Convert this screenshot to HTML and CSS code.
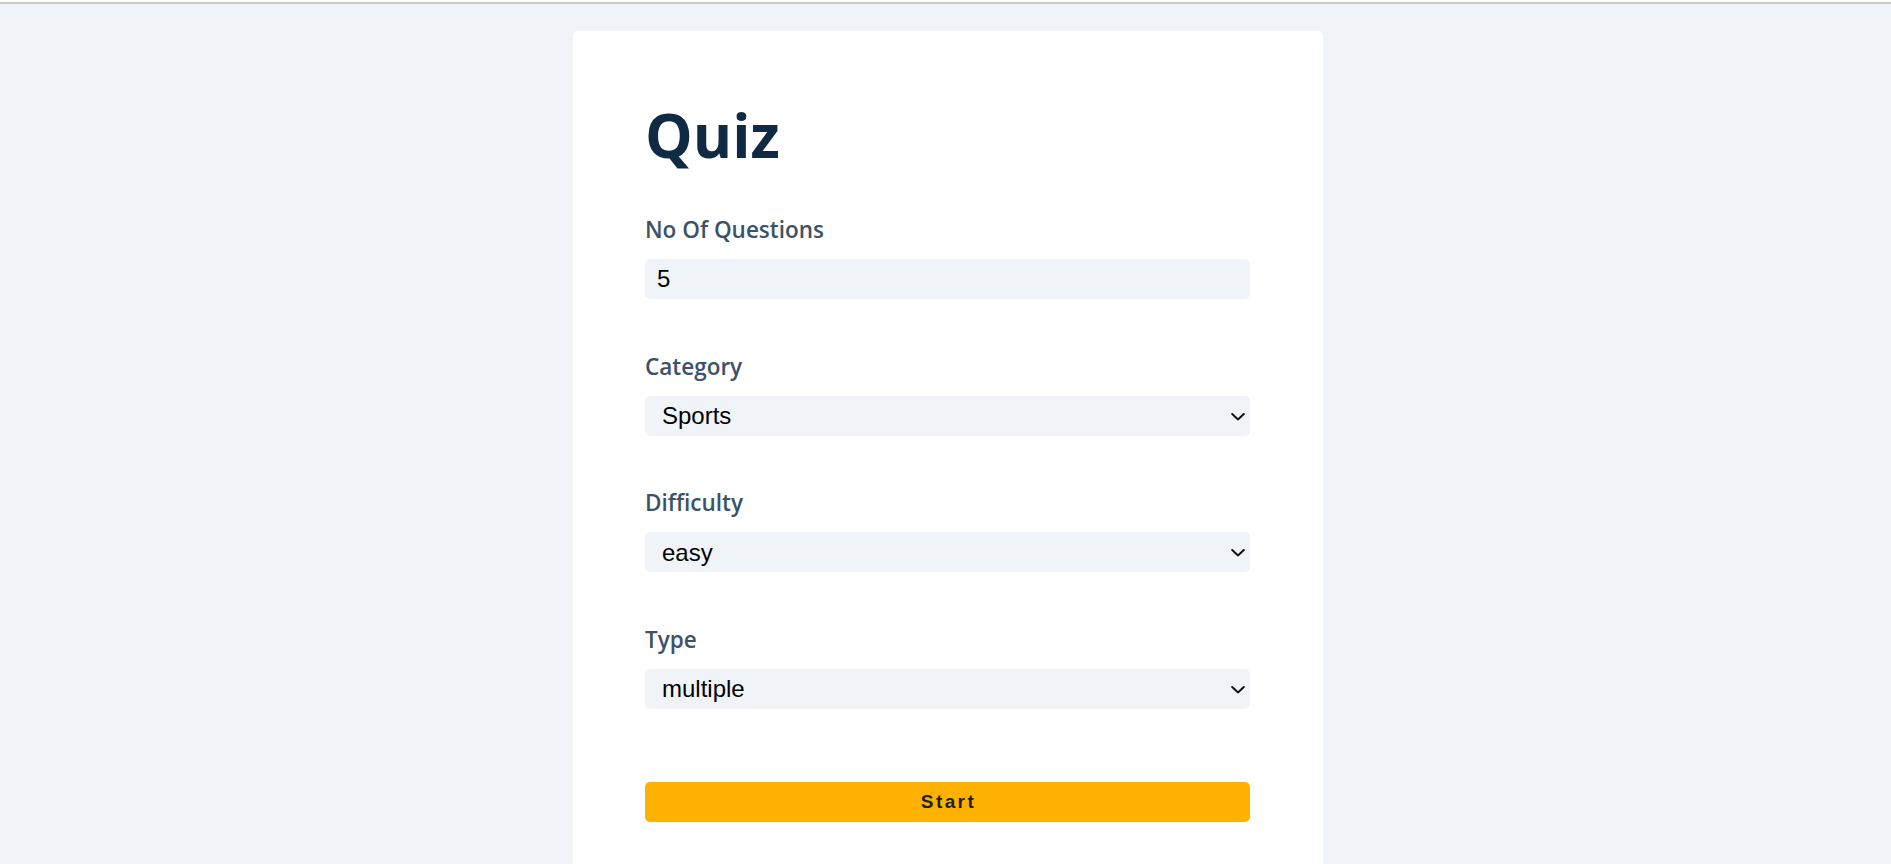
FILE: index.html
```html
<!DOCTYPE html>
<html lang="en">
<head>
<meta charset="utf-8">
<title>Quiz</title>
<link rel="stylesheet" href="styles.css">
</head>
<body>
<div class="edge"></div>
<main class="page">
  <section class="card">
    <h1 class="title">Quiz</h1>
    <form class="form">
      <div class="group">
        <label class="label" for="amount">No Of Questions</label>
        <input class="field" id="amount" type="number" value="5">
      </div>
      <div class="group">
        <label class="label" for="category">Category</label>
        <div class="select-wrap">
          <select class="field select" id="category">
            <option>Sports</option>
            <option>History</option>
            <option>Politics</option>
          </select>
          <svg class="chevron" width="14" height="8" viewBox="0 0 14 8"><path d="M1.2 1.2 L7 6.6 L12.8 1.2" fill="none" stroke="#111" stroke-width="2" stroke-linecap="round" stroke-linejoin="round"/></svg>
        </div>
      </div>
      <div class="group">
        <label class="label" for="difficulty">Difficulty</label>
        <div class="select-wrap">
          <select class="field select" id="difficulty">
            <option>easy</option>
            <option>medium</option>
            <option>hard</option>
          </select>
          <svg class="chevron" width="14" height="8" viewBox="0 0 14 8"><path d="M1.2 1.2 L7 6.6 L12.8 1.2" fill="none" stroke="#111" stroke-width="2" stroke-linecap="round" stroke-linejoin="round"/></svg>
        </div>
      </div>
      <div class="group">
        <label class="label" for="type">Type</label>
        <div class="select-wrap">
          <select class="field select" id="type">
            <option>multiple</option>
            <option>boolean</option>
          </select>
          <svg class="chevron" width="14" height="8" viewBox="0 0 14 8"><path d="M1.2 1.2 L7 6.6 L12.8 1.2" fill="none" stroke="#111" stroke-width="2" stroke-linecap="round" stroke-linejoin="round"/></svg>
        </div>
      </div>
      <button class="start" type="button">Start</button>
    </form>
  </section>
</main>
</body>
</html>
```

FILE: styles.css
```css
* { box-sizing: border-box; }

html, body {
  margin: 0;
  padding: 0;
  height: 100%;
  overflow: hidden;
}

body {
  background: #f0f4f8;
  font-family: "Open Sans", "Noto Sans", sans-serif;
}

.edge {
  height: 4px;
  background: #ffffff;
  border-top: 2px solid #ffffff;
  border-bottom: 2px solid #c8c9cc;
}

.page {
  display: flex;
  justify-content: center;
  padding-left: 5px;
  padding-top: 27px;
}

.card {
  width: 750px;
  min-height: 900px;
  background: #ffffff;
  border-radius: 5px;
  padding: 68px 73px 60px 72px;
}

.title {
  margin: 0 0 44px 0;
  font-size: 60px;
  line-height: 72px;
  font-weight: 700;
  color: #102a43;
  letter-spacing: 0;
}

.form {
  display: flex;
  flex-direction: column;
}

.group {
  display: flex;
  flex-direction: column;
  margin-bottom: 52.5px;
}

.label {
  font-size: 22.5px;
  line-height: 30px;
  font-weight: 600;
  color: #3b5269;
  margin-bottom: 14px;
}

.field {
  width: 100%;
  height: 40px;
  border: none;
  outline: none;
  border-radius: 5px;
  background: #f0f4f8;
  font-family: "Liberation Sans", Arial, sans-serif;
  font-size: 24px;
  color: #000;
  padding: 0 12px;
  margin: 0;
  -moz-appearance: textfield;
}

.field::-webkit-outer-spin-button,
.field::-webkit-inner-spin-button {
  -webkit-appearance: none;
  margin: 0;
}

.select-wrap {
  position: relative;
}

.select {
  appearance: none;
  -webkit-appearance: none;
  padding-left: 17px;
  display: block;
}

.chevron {
  position: absolute;
  right: 5px;
  top: 50%;
  transform: translateY(-40%);
  pointer-events: none;
}

.start {
  margin-top: 21px;
  width: 100%;
  height: 40px;
  border: none;
  border-radius: 5px;
  background: #ffb100;
  color: #222222;
  font-family: "Liberation Sans", Arial, sans-serif;
  font-size: 19px;
  font-weight: 700;
  letter-spacing: 2.4px;
  padding: 0 0 0 2px;
  cursor: pointer;
}
```
